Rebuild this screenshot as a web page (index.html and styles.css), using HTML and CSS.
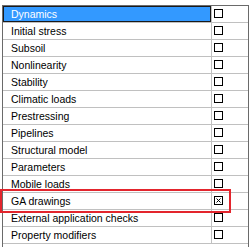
FILE: index.html
```html
<!DOCTYPE html>
<html lang="en">
<head>
    <meta charset="UTF-8">
    <meta name="viewport" content="width=device-width, initial-scale=1.0">
    <title>Options</title>
    <link rel="stylesheet" href="styles.css">
</head>
<body>

<div class="grid">
    <div class="row selected"><div class="label">Dynamics</div><div class="check"><span class="box"></span></div></div>
    <div class="row"><div class="label">Initial stress</div><div class="check"><span class="box"></span></div></div>
    <div class="row"><div class="label">Subsoil</div><div class="check"><span class="box"></span></div></div>
    <div class="row"><div class="label">Nonlinearity</div><div class="check"><span class="box"></span></div></div>
    <div class="row"><div class="label">Stability</div><div class="check"><span class="box"></span></div></div>
    <div class="row"><div class="label">Climatic loads</div><div class="check"><span class="box"></span></div></div>
    <div class="row"><div class="label">Prestressing</div><div class="check"><span class="box"></span></div></div>
    <div class="row"><div class="label">Pipelines</div><div class="check"><span class="box"></span></div></div>
    <div class="row"><div class="label">Structural model</div><div class="check"><span class="box"></span></div></div>
    <div class="row"><div class="label">Parameters</div><div class="check"><span class="box"></span></div></div>
    <div class="row"><div class="label">Mobile loads</div><div class="check"><span class="box"></span></div></div>
    <div class="row"><div class="label">GA drawings</div><div class="check">
        <svg class="box checked" width="9" height="9" viewBox="0 0 9 9">
            <rect x="0.5" y="0.5" width="8" height="8" fill="#fff" stroke="#000"/>
            <path d="M2.5 2.5 L6.5 6.5 M6.5 2.5 L2.5 6.5" stroke="#000" stroke-width="1" fill="none"/>
        </svg>
    </div></div>
    <div class="row"><div class="label">External application checks</div><div class="check"><span class="box"></span></div></div>
    <div class="row"><div class="label">Property modifiers</div><div class="check"><span class="box"></span></div></div>
    <div class="highlight"></div>
</div>

</body>
</html>
```

FILE: styles.css
```css
/* Page */
body {
    margin: 0;
    background: #ffffff;
    font-family: "Liberation Sans", Arial, sans-serif;
    font-size: 10.5px;
    color: #000;
}

/* Property grid */
.grid {
    position: relative;
    margin: 5px 0 0 2px;
    width: 245px;
    height: 242px;
    border-top: 1px solid #6a6a6a;
    border-left: 1px solid #6a6a6a;
    border-right: 1px solid #6a6a6a;
}

.row {
    display: flex;
    height: 16px;
    border-bottom: 1px solid #c0c0c0;
}

.label {
    width: 200px;
    padding-left: 8px;
    line-height: 16px;
    border-right: 1px solid #c0c0c0;
    white-space: nowrap;
    overflow: hidden;
}

.selected .label {
    background: #3399ff;
    color: #fff;
    box-shadow: inset 0 0 0 1px #1a1a1a;
}

.check {
    flex: 1;
    padding: 3px 0 0 2px;
}

.box {
    display: block;
    width: 7px;
    height: 7px;
    border: 1px solid #000;
    background: #fff;
}

.box.checked {
    border: none;
    width: 9px;
    height: 9px;
}

/* Red annotation frame round the GA drawings row */
.highlight {
    position: absolute;
    left: -3px;
    top: 183px;
    width: 227px;
    height: 20px;
    border: 2px solid #e3252d;
}
```
